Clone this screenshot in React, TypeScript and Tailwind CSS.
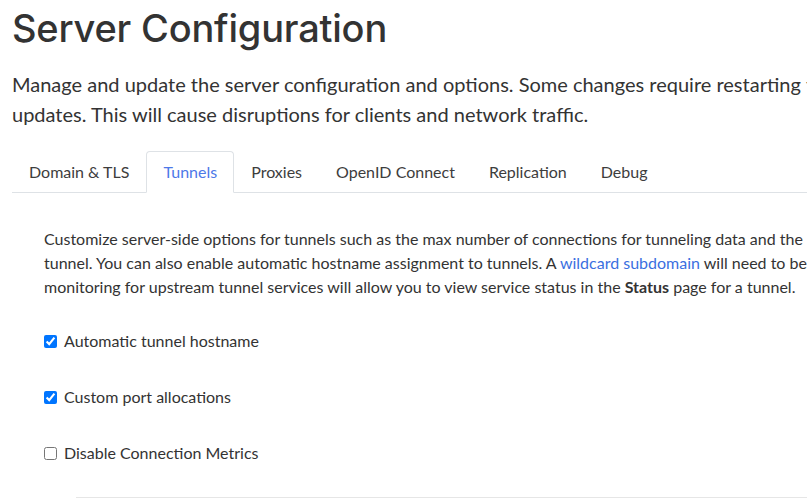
import React from "react";

const tabs = ["Domain & TLS", "Tunnels", "Proxies", "OpenID Connect", "Replication", "Debug"];

const options = [
  { label: "Automatic tunnel hostname", checked: true },
  { label: "Custom port allocations", checked: true },
  { label: "Disable Connection Metrics", checked: false },
];

export default function App() {
  return (
    <div className="w-[807px] h-[498px] overflow-hidden bg-white font-['Lato',sans-serif] text-[#333]">
      <div className="w-[1200px] pl-3">
        <h1 className="font-['Inter',sans-serif] font-medium text-[38px] leading-[56px] text-[#333] tracking-[-0.2px]">
          Server Configuration
        </h1>
        <p className="mt-[13px] text-[20px] leading-[30px] whitespace-nowrap">
          Manage and update the server configuration and options. Some changes require restarting the server to apply
          <br />
          updates. This will cause disruptions for clients and network traffic.
        </p>

        <ul className="mt-[22px] flex border-b border-[#dee2e6]">
          {tabs.map((t) => {
            const active = t === "Tunnels";
            return (
              <li key={t} className="-mb-px">
                <a
                  className={`block px-4 py-2 text-[16px] leading-6 border rounded-t ${
                    active
                      ? "border-[#dee2e6] border-b-white bg-white text-[#4c78e8]"
                      : "border-transparent text-[#3d3d3d]"
                  }`}
                >
                  {t}
                </a>
              </li>
            );
          })}
        </ul>

        <div className="pl-8 pt-[34px]">
          <p className="text-[16px] leading-6 whitespace-nowrap">
            Customize server-side options for tunnels such as the max number of connections for tunneling data and the max number of
            <br />
            tunnel. You can also enable automatic hostname assignment to tunnels. A{" "}
            <a className="text-[#3a6fdf]">wildcard subdomain</a> will need to be set up in your DNS. Enabling health
            <br />
            monitoring for upstream tunnel services will allow you to view service status in the <strong>Status</strong> page for a tunnel.
          </p>

          <div className="mt-[30px] flex flex-col gap-8">
            {options.map((o) => (
              <label key={o.label} className="flex items-center text-[16px] leading-6">
                <input type="checkbox" defaultChecked={o.checked} className="m-0 mr-[7px] w-[13px] h-[13px]" />
                {o.label}
              </label>
            ))}
          </div>

          <div className="mt-[32px] ml-[32px] border-t border-[#e6e6e6]" />
        </div>
      </div>
    </div>
  );
}
